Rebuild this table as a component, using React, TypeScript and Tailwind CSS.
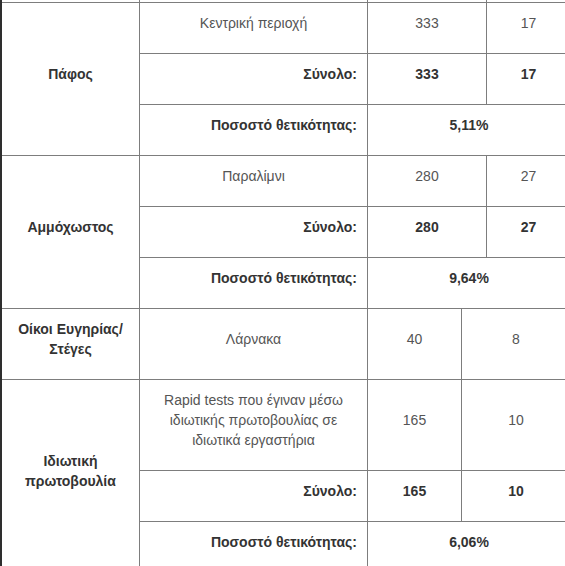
const font = { fontFamily: '"Liberation Sans", Arial, sans-serif' };

type Row = {
    place?: string;
    a?: string;
    b?: string;
    total?: boolean;
    rate?: string;
};

type Section = {
    label: string[];
    narrow: boolean;
    rows: Row[];
};

const sections: Section[] = [
    {
        label: ['Πάφος'],
        narrow: false,
        rows: [
            { place: 'Κεντρική περιοχή', a: '333', b: '17' },
            { total: true, a: '333', b: '17' },
            { rate: '5,11%' },
        ],
    },
    {
        label: ['Αμμόχωστος'],
        narrow: false,
        rows: [
            { place: 'Παραλίμνι', a: '280', b: '27' },
            { total: true, a: '280', b: '27' },
            { rate: '9,64%' },
        ],
    },
    {
        label: ['Οίκοι Ευγηρίας/', 'Στέγες'],
        narrow: true,
        rows: [{ place: 'Λάρνακα', a: '40', b: '8' }],
    },
    {
        label: ['Ιδιωτική', 'πρωτοβουλία'],
        narrow: true,
        rows: [
            {
                place: 'Rapid tests που έγιναν μέσω\nιδιωτικής πρωτοβουλίας σε\nιδιωτικά εργαστήρια',
                a: '165',
                b: '10',
            },
            { total: true, a: '165', b: '10' },
            { rate: '6,06%' },
        ],
    },
];

const cell = 'flex items-center pt-[10px] pb-[20px] border-r border-b border-[#7d7d7d] leading-[20px]';

function Lines({ text }: { text: string }) {
    const parts = text.split('\n');
    return (
        <span>
            {parts.map((p, i) => (
                <span key={i}>
                    {p}
                    {i < parts.length - 1 && <br />}
                </span>
            ))}
        </span>
    );
}

function SectionBlock({ s }: { s: Section }) {
    const span = s.rows.length === 3 ? 'row-span-3' : 'row-span-1';
    return (
        <div
            className={`grid ${s.narrow ? 'grid-cols-[138px_228px_94px_109px]' : 'grid-cols-[138px_228px_119px_84px]'}`}
        >
            <div className={`${cell} ${span} justify-center text-center font-bold text-[#333]`}>
                <span>
                    {s.label.map((l, i) => (
                        <span key={i}>
                            {l}
                            {i < s.label.length - 1 && <br />}
                        </span>
                    ))}
                </span>
            </div>
            {s.rows.map((r, i) => {
                if (r.rate) {
                    return [
                        <div key={`${i}l`} className={`${cell} justify-end pr-[10px] font-bold text-[#333]`}>
                            Ποσοστό θετικότητας:
                        </div>,
                        <div key={`${i}r`} className={`${cell} col-span-2 justify-center font-bold text-[#333]`}>
                            {r.rate}
                        </div>,
                    ];
                }
                if (r.total) {
                    return [
                        <div key={`${i}l`} className={`${cell} justify-end pr-[10px] font-bold text-[#333]`}>
                            Σύνολο:
                        </div>,
                        <div key={`${i}a`} className={`${cell} justify-center font-bold text-[#333]`}>
                            {r.a}
                        </div>,
                        <div key={`${i}b`} className={`${cell} justify-center font-bold text-[#333]`}>
                            {r.b}
                        </div>,
                    ];
                }
                return [
                    <div key={`${i}l`} className={`${cell} justify-center text-center text-[#555]`}>
                        <Lines text={r.place ?? ''} />
                    </div>,
                    <div key={`${i}a`} className={`${cell} justify-center text-[#555]`}>
                        {r.a}
                    </div>,
                    <div key={`${i}b`} className={`${cell} justify-center text-[#555]`}>
                        {r.b}
                    </div>,
                ];
            })}
        </div>
    );
}

export default function App() {
    return (
        <div className="w-[565px] h-[566px] overflow-hidden bg-white text-[14px]" style={font}>
            <div className="w-[571px] border-l-2 border-[#2e2e2e]">
                {/* tail of the previous row */}
                <div className="grid grid-cols-[138px_228px_119px_84px] h-[3px] border-b border-[#7d7d7d]">
                    <div className="border-r border-[#7d7d7d]" />
                    <div className="border-r border-[#7d7d7d]" />
                    <div className="border-r border-[#7d7d7d]" />
                    <div className="border-r border-[#7d7d7d]" />
                </div>
                {sections.map((s) => (
                    <SectionBlock key={s.label.join(' ')} s={s} />
                ))}
            </div>
        </div>
    );
}
